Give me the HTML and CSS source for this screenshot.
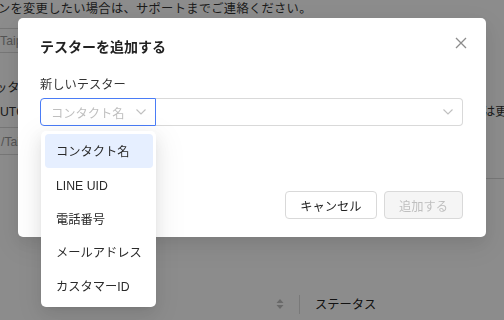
FILE: index.html
```html
<!DOCTYPE html>
<html lang="ja">
<head>
    <meta charset="UTF-8">
    <meta name="viewport" content="width=device-width, initial-scale=1.0">
    <title>テスターを追加する</title>
    <link rel="stylesheet" href="styles.css">
</head>
<body>
    <div class="page">
        <p class="note">ーンを変更したい場合は、サポートまでご連絡ください。</p>
        <div class="bg-input bg-input-top">Taipei</div>
        <p class="bg-label">ッター</p>
        <div class="bg-row">
            <span>UTC+8</span>
            <span>は更新されます</span>
        </div>
        <div class="bg-input bg-input-bottom">/Taipei</div>
        <div class="bg-divider"></div>
        <div class="bg-table-head">
            <svg class="sorter" width="8" height="12" viewBox="0 0 8 12"><path d="M4 1L7.5 5H0.5Z M4 11L7.5 7H0.5Z" fill="#bfbfbf"/></svg>
            <span class="col-sep"></span>
            <span class="col-title">ステータス</span>
        </div>
    </div>

    <div class="mask"></div>

    <div class="modal">
        <button type="button" class="modal-close" aria-label="閉じる">
            <svg width="12" height="12" viewBox="0 0 12 12"><path d="M1 1L11 11M11 1L1 11" stroke="#8c8c8c" stroke-width="1.3" fill="none"/></svg>
        </button>
        <h2 class="modal-title">テスターを追加する</h2>

        <label class="field-label">新しいテスター</label>
        <div class="combo">
            <div class="combo-type">
                <span class="placeholder">コンタクト名</span>
                <svg class="chevron" width="10" height="6" viewBox="0 0 10 6"><path d="M0.5 0.5L5 5L9.5 0.5" stroke="#bfbfbf" stroke-width="1.1" fill="none"/></svg>
            </div>
            <div class="combo-value">
                <svg class="chevron" width="10" height="6" viewBox="0 0 10 6"><path d="M0.5 0.5L5 5L9.5 0.5" stroke="#bfbfbf" stroke-width="1.1" fill="none"/></svg>
            </div>

            <ul class="dropdown">
                <li class="dropdown-item selected">コンタクト名</li>
                <li class="dropdown-item">LINE UID</li>
                <li class="dropdown-item">電話番号</li>
                <li class="dropdown-item">メールアドレス</li>
                <li class="dropdown-item">カスタマーID</li>
            </ul>
        </div>

        <div class="modal-footer">
            <button type="button" class="btn">キャンセル</button>
            <button type="button" class="btn" disabled>追加する</button>
        </div>
    </div>
</body>
</html>
```

FILE: styles.css
```css
body {
    margin: 0;
    overflow: hidden;
    font-family: "Liberation Sans", "Noto Sans CJK JP", sans-serif;
    font-size: 12.25px;
    line-height: 20px;
    color: #333;
    background: #fff;
}
.page {
    width: 504px;
    height: 320px;
}
.note {
    margin: 0 0 0 -14px;
    line-height: 18px;
    letter-spacing: 0.3px;
    white-space: nowrap;
}
.bg-input {
    box-sizing: border-box;
    height: 25px;
    border: 1px solid #d9d9d9;
    border-radius: 4px;
    color: #999;
    line-height: 25px;
}
.bg-input-top {
    margin: 10px 0 0 -12px;
    width: 200px;
    padding-left: 11px;
}
.bg-label {
    margin: 25px 0 0 -5px;
    white-space: nowrap;
}
.bg-row {
    display: grid;
    grid-template-columns: 483px auto;
    margin-top: 4px;
    white-space: nowrap;
}
.bg-input-bottom {
    margin: 5px 0 0 -8px;
    width: 200px;
    height: 28px;
    padding-left: 8px;
    line-height: 29px;
}
.bg-divider {
    margin: 23px 0 0 300px;
    border-top: 1px solid #d9d9d9;
}
.bg-table-head {
    display: flex;
    align-items: center;
    margin: 115px 0 0 276px;
    height: 20px;
}
.sorter {
    display: block;
}
.col-sep {
    width: 1px;
    height: 19px;
    margin-left: 15px;
    background: #ddd;
}
.col-title {
    margin-left: 15px;
    padding-top: 2px;
    color: #222;
}

.mask {
    position: fixed;
    inset: 0;
    background: rgba(0, 0, 0, 0.45);
}
.modal {
    position: fixed;
    top: 18px;
    left: 18px;
    width: 468px;
    box-sizing: border-box;
    padding: 18px 23px 18px 22px;
    background: #fff;
    border-radius: 5px;
    box-shadow: 0 6px 16px rgba(0, 0, 0, 0.08), 0 9px 28px 8px rgba(0, 0, 0, 0.05);
}
.modal-close {
    position: absolute;
    top: 19px;
    right: 19px;
    width: 12px;
    height: 12px;
    padding: 0;
    border: none;
    background: none;
    display: flex;
}
.modal-title {
    margin: 0;
    font-size: 14px;
    font-weight: 700;
    line-height: 22px;
    color: #222;
}
.field-label {
    display: block;
    margin-top: 17px;
    color: #333;
}
.combo {
    position: relative;
    display: flex;
    height: 28px;
    margin-top: 3px;
}
.combo-type {
    display: flex;
    align-items: center;
    justify-content: space-between;
    box-sizing: border-box;
    width: 116px;
    padding: 0 9px 0 10px;
    border: 1px solid #4a7cf6;
    border-radius: 4px 0 0 4px;
}
.placeholder {
    padding-top: 4px;
    color: #bfbfbf;
}
.combo-value {
    flex: 1;
    display: flex;
    align-items: center;
    justify-content: flex-end;
    padding-right: 9px;
    border: 1px solid #d9d9d9;
    border-left: none;
    border-radius: 0 4px 4px 0;
}
.dropdown {
    position: absolute;
    top: calc(100% + 5px);
    left: 1px;
    width: 115px;
    box-sizing: border-box;
    margin: 0;
    padding: 3px 3.5px 4px;
    list-style: none;
    background: #fff;
    border-radius: 5px;
    box-shadow: 0 6px 16px rgba(0, 0, 0, 0.08), 0 3px 6px -4px rgba(0, 0, 0, 0.12), 0 9px 28px 8px rgba(0, 0, 0, 0.05);
}
.dropdown-item {
    height: 33.8px;
    line-height: 37.8px;
    padding-left: 11.5px;
    color: #2a2a2a;
    border-radius: 4px;
    white-space: nowrap;
}
.dropdown-item.selected {
    background: #e6efff;
}
.modal-footer {
    display: flex;
    justify-content: flex-end;
    gap: 7.5px;
    margin-top: 65px;
}
.btn {
    height: 28px;
    padding: 2px 14px 0;
    border: 1px solid #d9d9d9;
    border-radius: 4px;
    background: #fff;
    color: #222;
    font-family: inherit;
    font-size: 12.25px;
}
.btn:disabled {
    background: #f5f5f5;
    color: #bfbfbf;
}
```
